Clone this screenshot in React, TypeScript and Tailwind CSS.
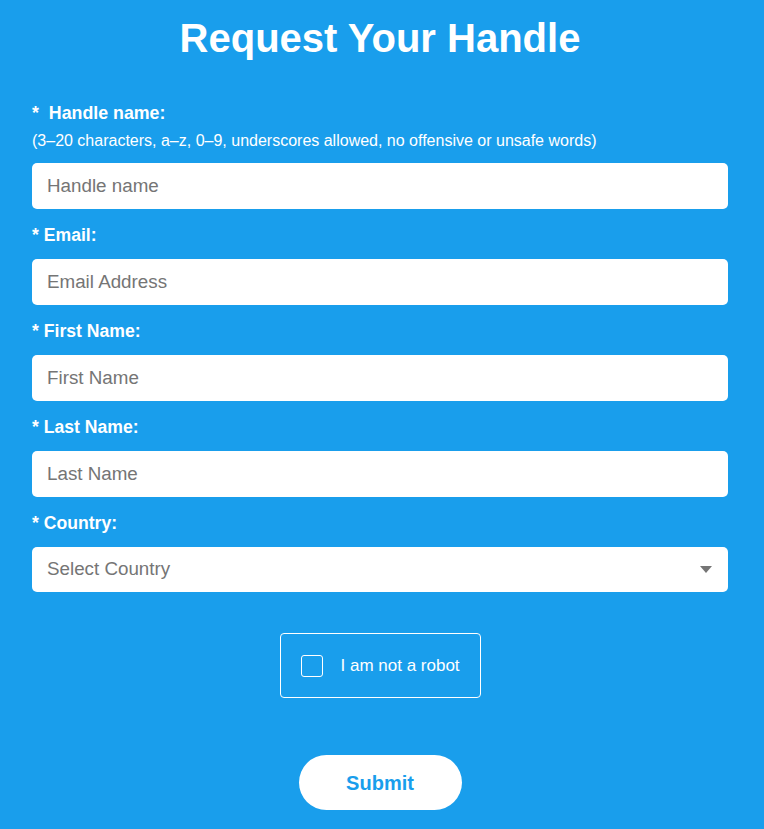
import React from "react";

const fields = [
  { label: "Email:", placeholder: "Email Address" },
  { label: "First Name:", placeholder: "First Name" },
  { label: "Last Name:", placeholder: "Last Name" },
];

function TextInput({ placeholder }: { placeholder: string }) {
  return (
    <input
      type="text"
      placeholder={placeholder}
      className="block w-full h-[46px] rounded-[5px] bg-white px-[15px] text-[18.8px] text-[#333] placeholder:text-[#757575] outline-none"
    />
  );
}

export default function App() {
  return (
    <div
      className="min-h-[829px] w-full bg-[#199eec] text-white"
      style={{ fontFamily: '"Liberation Sans", Arial, sans-serif' }}
    >
      <div className="pl-[32px] pr-[36px] pt-[15px] pb-[19px]">
        <h1 className="text-center text-[40px] font-bold leading-[46px]">Request Your Handle</h1>

        <div className="mt-[42px]">
          <div className="text-[17.8px] font-bold leading-[20px]">*&nbsp; Handle name:</div>
          <div className="mt-[9px] text-[16px] leading-[18px]">
            (3–20 characters, a–z, 0–9, underscores allowed, no offensive or unsafe words)
          </div>
          <div className="mt-[13px]">
            <TextInput placeholder="Handle name" />
          </div>
        </div>

        {fields.map((f) => (
          <div key={f.label} className="mt-[16px]">
            <div className="text-[17.6px] font-bold leading-[20px]">* {f.label}</div>
            <div className="mt-[14px]">
              <TextInput placeholder={f.placeholder} />
            </div>
          </div>
        ))}

        <div className="mt-[16px]">
          <div className="text-[17.6px] font-bold leading-[20px]">* Country:</div>
          <div className="relative mt-[14px]">
            <select
              defaultValue=""
              className="block w-full h-[45px] appearance-none rounded-[5px] bg-white px-[15px] text-[18.8px] text-[#757575] outline-none"
            >
              <option value="" disabled>
                Select Country
              </option>
            </select>
            <svg
              className="pointer-events-none absolute right-[16px] top-[19px]"
              width="12"
              height="7"
              viewBox="0 0 12 7"
            >
              <path d="M0 0 L12 0 L6 7 Z" fill="#757575" />
            </svg>
          </div>
        </div>

        <div className="mt-[41px] flex justify-center">
          <label className="flex h-[65px] w-[201px] items-center rounded-[4px] border border-white pl-[20px]">
            <span className="block h-[22px] w-[22px] rounded-[3px] border border-white" />
            <span className="ml-[18px] text-[17px]">I am not a robot</span>
          </label>
        </div>

        <div className="mt-[57px] flex justify-center">
          <button className="h-[55px] w-[163px] rounded-full bg-white text-[20px] font-bold text-[#199eec]">
            Submit
          </button>
        </div>
      </div>
    </div>
  );
}
